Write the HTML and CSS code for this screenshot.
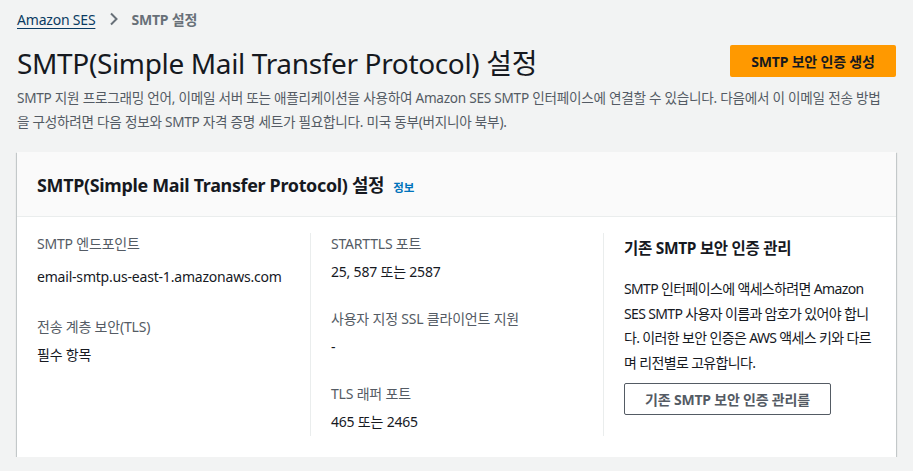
FILE: index.html
```html
<!DOCTYPE html>
<html lang="ko">
<head>
<meta charset="utf-8">
<link rel="stylesheet" href="styles.css">
</head>
<body>
<div class="page">
  <nav class="crumbs">
    <a class="crumb-link" href="#">Amazon SES</a>
    <svg class="chev" width="10" height="14" viewBox="0 0 10 14"><path d="M2 1.5 L7.5 7 L2 12.5" fill="none" stroke="#687078" stroke-width="2"/></svg>
    <span class="crumb-current">SMTP 설정</span>
  </nav>
  <header class="head">
    <div class="head-row">
      <h1 class="title">SMTP(Simple Mail Transfer Protocol) 설정</h1>
      <button class="btn-primary">SMTP 보안 인증 생성</button>
    </div>
    <p class="desc">SMTP 지원 프로그래밍 언어, 이메일 서버 또는 애플리케이션을 사용하여 Amazon SES SMTP 인터페이스에 연결할 수 있습니다. 다음에서 이 이메일 전송 방법을 구성하려면 다음 정보와 SMTP 자격 증명 세트가 필요합니다. 미국 동부(버지니아 북부).</p>
  </header>
  <section class="card">
    <div class="card-head">
      <h2 class="card-title">SMTP(Simple Mail Transfer Protocol) 설정</h2>
      <a class="info" href="#">정보</a>
    </div>
    <div class="card-body">
      <div class="col">
        <div class="kv kv-first">
          <div class="label">SMTP 엔드포인트</div>
          <div class="value value-tall">email-smtp.us-east-1.amazonaws.com</div>
        </div>
        <div class="kv">
          <div class="label">전송 계층 보안(TLS)</div>
          <div class="value">필수 항목</div>
        </div>
      </div>
      <div class="col col-div">
        <div class="kv">
          <div class="label">STARTTLS 포트</div>
          <div class="value">25, 587 또는 2587</div>
        </div>
        <div class="kv">
          <div class="label">사용자 지정 SSL 클라이언트 지원</div>
          <div class="value">-</div>
        </div>
        <div class="kv kv-last">
          <div class="label">TLS 래퍼 포트</div>
          <div class="value">465 또는 2465</div>
        </div>
      </div>
      <div class="col col-div">
        <h3 class="sub-title">기존 SMTP 보안 인증 관리</h3>
        <p class="sub-text"><span class="word">SMTP</span> 인터페이스에 액세스하려면 <span class="word">Amazon</span> <span class="word">SES</span> <span class="word">SMTP</span> 사용자 이름과 암호가 있어야 합니다. 이러한 보안 인증은 <span class="word">AWS</span> 액세스 키와 다르며 리전별로 고유합니다.</p>
        <button class="btn-normal">기존 SMTP 보안 인증 관리를</button>
      </div>
    </div>
  </section>
</div>
</body>
</html>
```

FILE: styles.css
```css
html, body {
  margin: 0;
  padding: 0;
  background: #f2f3f3;
}
body {
  font-family: "Noto Sans", "Noto Sans CJK KR", sans-serif;
  color: #16191f;
  font-size: 14px;
}
.page {
  padding: 8px 17px 0 17px;
}
.crumbs {
  display: flex;
  align-items: center;
  height: 22px;
  font-size: 14px;
}
.crumb-link {
  color: #0a3b62;
  text-decoration: underline;
  text-underline-offset: 3px;
  text-decoration-thickness: 1px;
  letter-spacing: -0.2px;
}
.chev {
  margin: 0 12px 0 14px;
}
.crumb-current {
  color: #687078;
  font-weight: 700;
  letter-spacing: -0.2px;
}
.head {
  margin-top: 14px;
}
.head-row {
  display: flex;
  justify-content: space-between;
  align-items: flex-start;
}
.title {
  margin: 0;
  font-size: 28px;
  font-weight: 400;
  line-height: 38px;
  letter-spacing: -0.35px;
  color: #16191f;
}
.btn-primary {
  margin-top: 1px;
  width: 166px;
  height: 32px;
  border: none;
  border-radius: 2px;
  background: #ff9900;
  color: #16191f;
  font-family: inherit;
  font-size: 14px;
  font-weight: 700;
  letter-spacing: -0.2px;
}
.desc {
  margin: 4px 0 0 0;
  font-size: 13.6px;
  line-height: 24px;
  color: #545b64;
  letter-spacing: -0.25px;
  padding-right: 6px;
}
.card {
  margin-top: 18px;
  background: #fff;
  box-shadow: 0 1px 1px 0 rgba(0,28,36,.3), 1px 1px 1px 0 rgba(0,28,36,.15), -1px 1px 1px 0 rgba(0,28,36,.15);
}
.card-head {
  display: flex;
  align-items: baseline;
  gap: 9px;
  padding: 20px 20px 18px 20px;
  background: #fafafa;
  border-bottom: 1px solid #eaeded;
}
.card-title {
  margin: 0;
  font-size: 17.9px;
  font-weight: 700;
  line-height: 26px;
  letter-spacing: -0.3px;
}
.info {
  color: #0073bb;
  font-size: 11.5px;
  font-weight: 700;
  text-decoration: none;
}
.card-body {
  display: grid;
  grid-template-columns: 1fr 1fr 1fr;
  padding: 16px 0 21px 0;
}
.col {
  padding: 0 20px;
  min-height: 203px;
}
.col-div {
  border-left: 1px solid #eaeded;
}
.kv {
  margin-bottom: 25px;
}
.kv-last {
  margin-bottom: 0;
}
.label {
  color: #545b64;
  font-size: 14px;
  line-height: 22px;
  letter-spacing: -0.2px;
}
.value {
  margin-top: 6px;
  font-size: 14px;
  line-height: 22px;
  letter-spacing: -0.2px;
}
.value-tall {
  margin-top: 11px;
}
.kv-first {
  margin-bottom: 28px;
}
.sub-title {
  margin: 3px 0 0 0;
  font-size: 15.5px;
  font-weight: 700;
  line-height: 24px;
  letter-spacing: -0.3px;
}
.sub-text {
  margin: 17px 0 0 0;
  font-size: 14px;
  line-height: 24.5px;
  letter-spacing: -0.65px;
  word-break: break-all;
}
.word {
  white-space: nowrap;
}
.btn-normal {
  margin-top: 8px;
  width: 207px;
  height: 32px;
  background: #fff;
  border: 1px solid #545b64;
  border-radius: 2px;
  color: #545b64;
  font-family: inherit;
  font-size: 14px;
  font-weight: 700;
  letter-spacing: -0.2px;
}
```
